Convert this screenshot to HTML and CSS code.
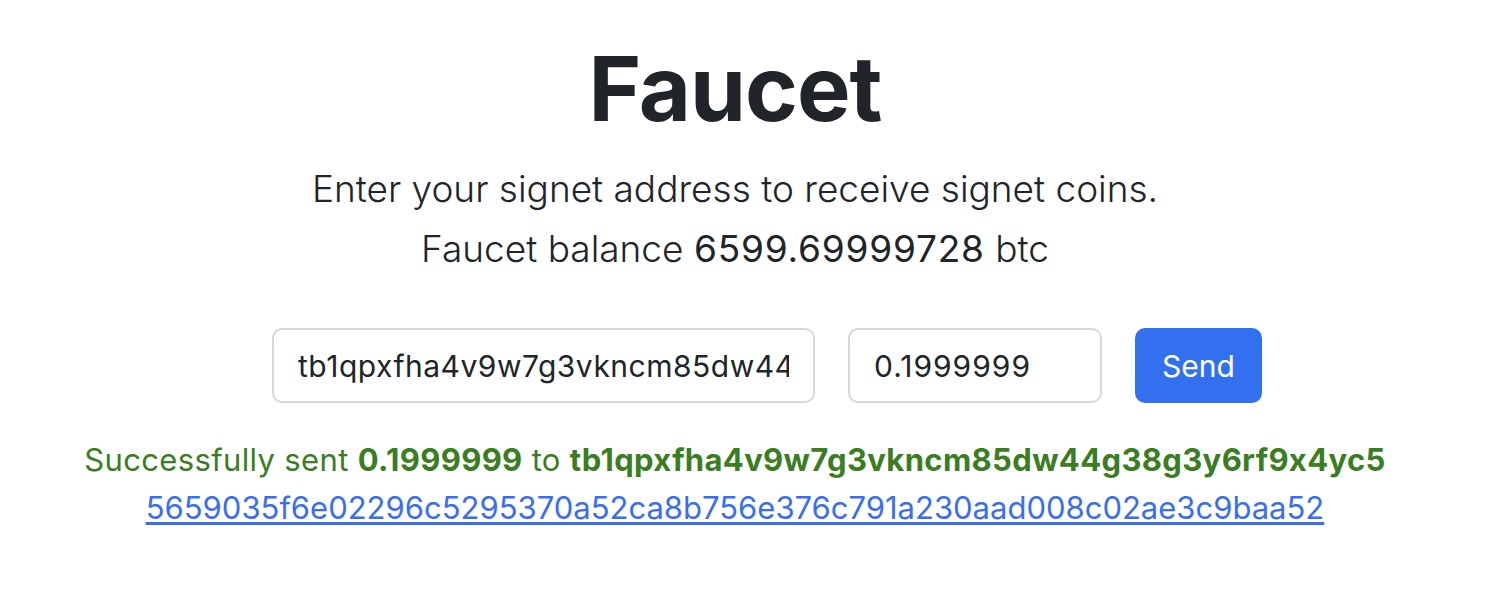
FILE: index.html
```html
<!DOCTYPE html>
<html lang="en">
<head>
<meta charset="utf-8">
<title>Faucet</title>
<link rel="stylesheet" href="styles.css">
</head>
<body>
<main class="page">
  <h1 class="title">Faucet</h1>
  <div class="intro">
    <p class="lead">Enter your signet address to receive signet coins.</p>
    <p class="lead">Faucet balance <strong>6599.69999728</strong> btc</p>
  </div>
  <form class="send-form">
    <input class="field field-address" type="text" value="tb1qpxfha4v9w7g3vkncm85dw44g38g3y6rf9x4yc5">
    <input class="field field-amount" type="text" value="0.1999999">
    <button class="btn" type="button">Send</button>
  </form>
  <div class="result">
    <p class="success">Successfully sent <strong>0.1999999</strong> to <strong>tb1qpxfha4v9w7g3vkncm85dw44g38g3y6rf9x4yc5</strong></p>
    <a class="txid" href="#">5659035f6e02296c5295370a52ca8b756e376c791a230aad008c02ae3c9baa52</a>
  </div>
</main>
</body>
</html>
```
FILE: styles.css
```css
* { box-sizing: border-box; }
html, body { margin: 0; padding: 0; background: #fff; }
body {
  font-family: Inter, "Noto Sans", "Liberation Sans", sans-serif;
  font-feature-settings: "calt" 0;
  color: #212529;
}
.page {
  display: flex;
  flex-direction: column;
  align-items: center;
  padding: 35px 24px 0 0;
}
.title {
  margin: 0;
  font-size: 90px;
  font-weight: 700;
  line-height: 108px;
  letter-spacing: -1px;
}
.intro {
  margin-top: 16px;
  text-align: center;
}
.lead {
  margin: 0;
  font-size: 37px;
  font-weight: 300;
  line-height: 60px;
}
.lead strong {
  font-weight: 400;
  letter-spacing: 0.8px;
}
.send-form {
  display: flex;
  gap: 33px;
  margin: 49px 0 0 64px;
}
.field {
  height: 75px;
  border: 2px solid #d6d8db;
  border-radius: 10px;
  padding: 0 24px;
  font-family: inherit;
  font-feature-settings: "calt" 0;
  font-size: 30px;
  letter-spacing: 0.5px;
  color: #212529;
  background: #fff;
  outline: none;
}
.field-address { width: 543px; }
.field-amount { width: 254px; letter-spacing: 1px; }
.btn {
  height: 75px;
  width: 127px;
  border: none;
  border-radius: 10px;
  background: #3370f0;
  color: #fff;
  font-family: inherit;
  font-size: 30px;
}
.result {
  margin-top: 33px;
  text-align: center;
  font-size: 31px;
  line-height: 48px;
}
.success {
  margin: 0;
  color: #3a7d22;
  letter-spacing: 0.35px;
}
.success strong { font-weight: 700; }
.txid {
  display: inline-block;
  color: #3a6ef0;
  text-decoration: underline;
  text-underline-offset: 3px;
}
```
